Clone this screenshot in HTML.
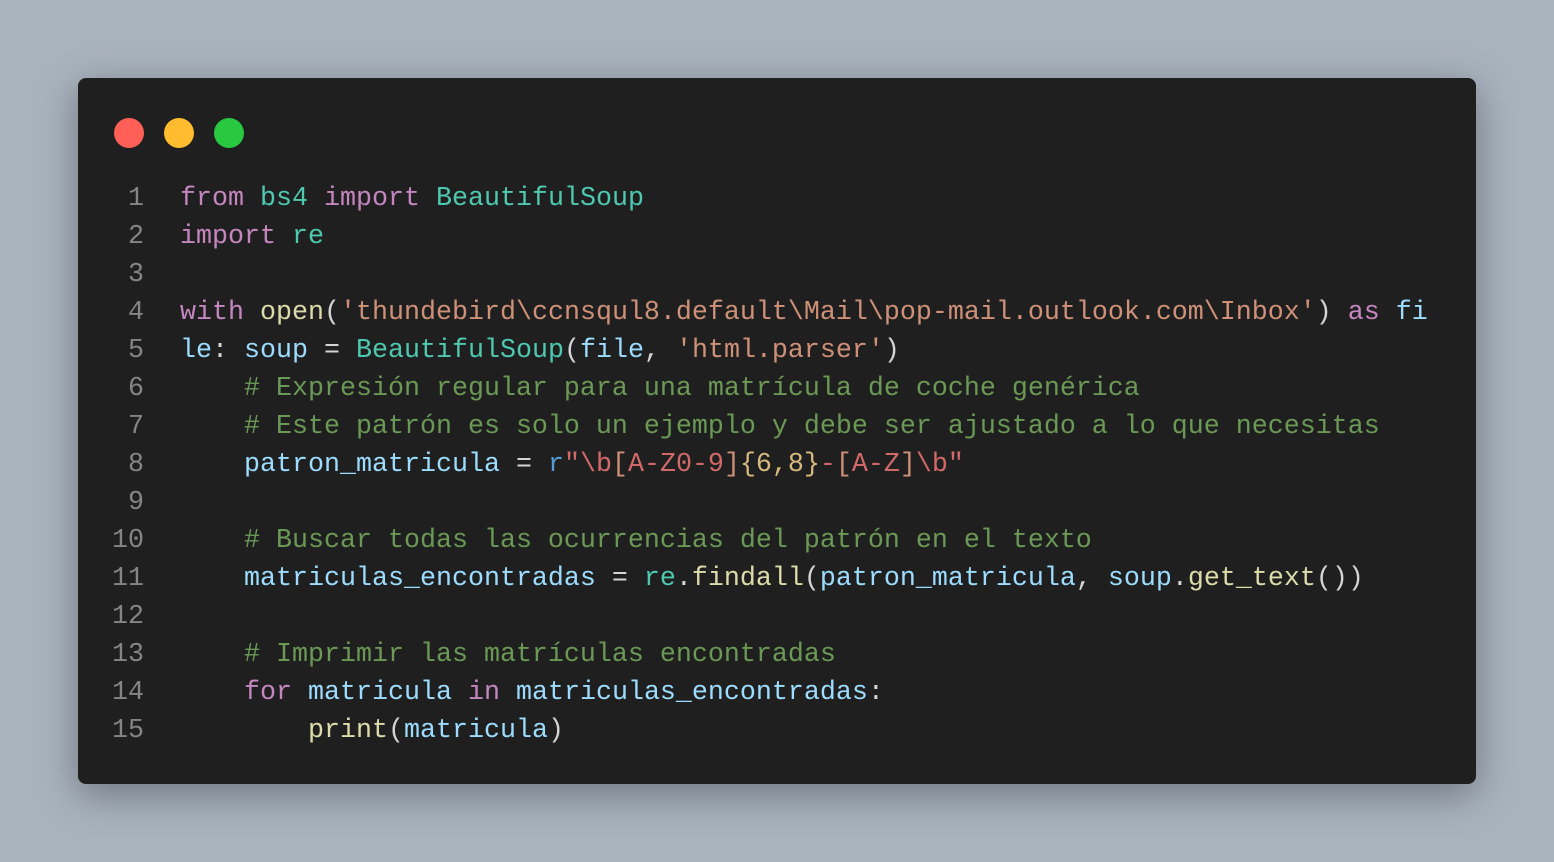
<!DOCTYPE html>
<html><head><meta charset="utf-8"><style>
html,body{margin:0;padding:0}
body{width:1554px;height:862px;background:#a9b3be;position:relative;overflow:hidden;font-family:"Liberation Mono",monospace}
.win{position:absolute;left:78px;top:78px;width:1398px;height:706px;background:#1f1f1f;border-radius:8px;box-shadow:0 10px 40px rgba(0,0,0,.35)}
.dot{position:absolute;top:40px;width:30px;height:30px;border-radius:50%}
pre{margin:0;position:absolute;top:102px;left:0;font-family:"Liberation Mono",monospace;font-size:26.67px;line-height:38px;color:#d4d4d4;white-space:pre}
.n{display:inline-block;width:66px;text-align:right;color:#858585;margin-right:36px}
.k{color:#c586c0}.t{color:#4ec9b0}.f{color:#dcdcaa}.s{color:#ce9178}.v{color:#9cdcfe}.c{color:#6a9955}.b{color:#569cd6}.r{color:#d16969}.q{color:#d7ba7d}
</style></head><body>
<div class="win">
<div class="dot" style="left:36px;background:#ff5f57"></div>
<div class="dot" style="left:86px;background:#febc2e"></div>
<div class="dot" style="left:136px;background:#28c840"></div>
<pre><span class="n">1</span><span class="k">from</span> <span class="t">bs4</span> <span class="k">import</span> <span class="t">BeautifulSoup</span>
<span class="n">2</span><span class="k">import</span> <span class="t">re</span>
<span class="n">3</span>
<span class="n">4</span><span class="k">with</span> <span class="f">open</span>(<span class="s">'thundebird\ccnsqul8.default\Mail\pop-mail.outlook.com\Inbox'</span>) <span class="k">as</span> <span class="v">fi</span>
<span class="n">5</span><span class="v">le</span>: <span class="v">soup</span> = <span class="t">BeautifulSoup</span>(<span class="v">file</span>, <span class="s">'html.parser'</span>)
<span class="n">6</span>    <span class="c"># Expresión regular para una matrícula de coche genérica</span>
<span class="n">7</span>    <span class="c"># Este patrón es solo un ejemplo y debe ser ajustado a lo que necesitas</span>
<span class="n">8</span>    <span class="v">patron_matricula</span> = <span class="b">r</span><span class="r">"\b</span><span class="s">[</span><span class="r">A-Z0-9</span><span class="s">]</span><span class="q">{6,8}</span><span class="r">-</span><span class="s">[</span><span class="r">A-Z</span><span class="s">]</span><span class="r">\b"</span>
<span class="n">9</span>
<span class="n">10</span>    <span class="c"># Buscar todas las ocurrencias del patrón en el texto</span>
<span class="n">11</span>    <span class="v">matriculas_encontradas</span> = <span class="t">re</span>.<span class="f">findall</span>(<span class="v">patron_matricula</span>, <span class="v">soup</span>.<span class="f">get_text</span>())
<span class="n">12</span>
<span class="n">13</span>    <span class="c"># Imprimir las matrículas encontradas</span>
<span class="n">14</span>    <span class="k">for</span> <span class="v">matricula</span> <span class="k">in</span> <span class="v">matriculas_encontradas</span>:
<span class="n">15</span>        <span class="f">print</span>(<span class="v">matricula</span>)</pre>
</div>
</body></html>
